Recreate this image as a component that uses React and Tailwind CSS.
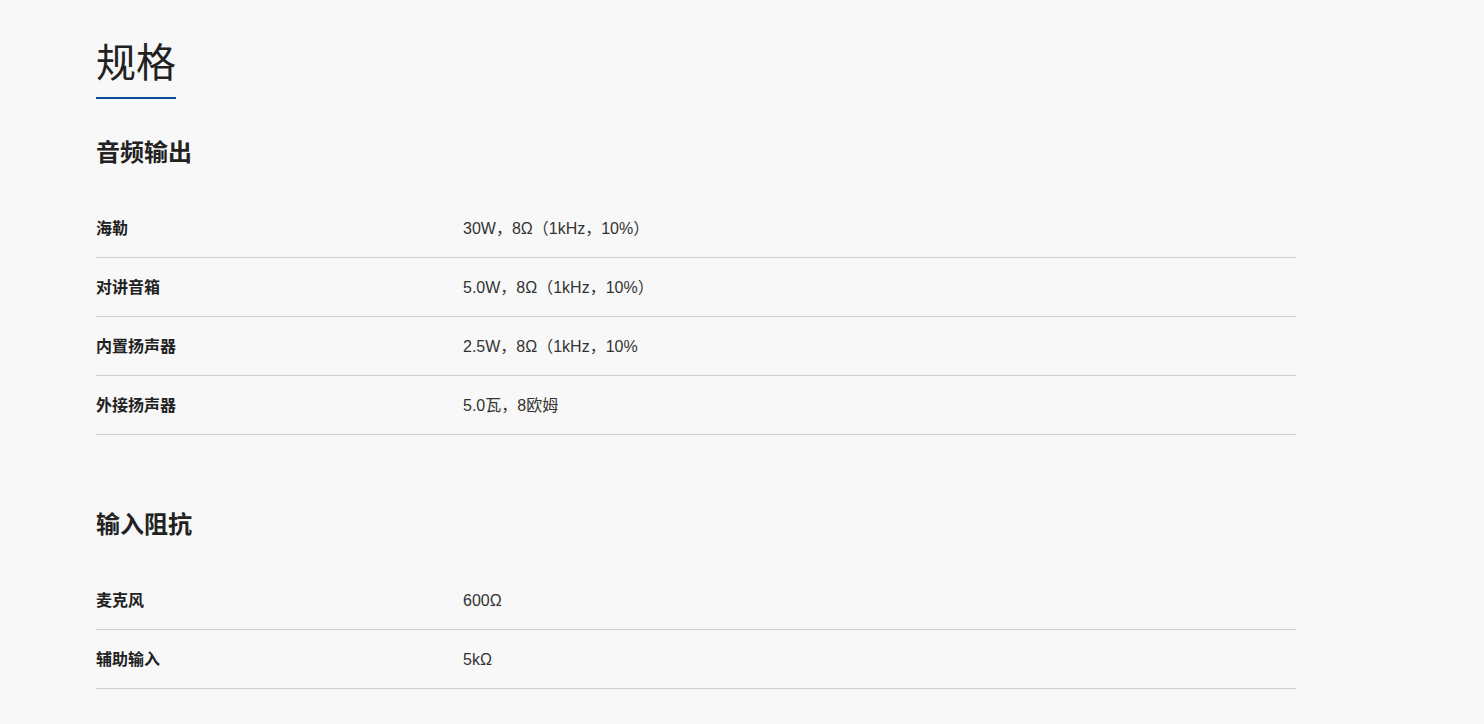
import React from "react";

const sections = [
  {
    title: "音频输出",
    rows: [
      ["海勒", "30W，8Ω（1kHz，10%）"],
      ["对讲音箱", "5.0W，8Ω（1kHz，10%）"],
      ["内置扬声器", "2.5W，8Ω（1kHz，10%"],
      ["外接扬声器", "5.0瓦，8欧姆"],
    ],
  },
  {
    title: "输入阻抗",
    rows: [
      ["麦克风", "600Ω"],
      ["辅助输入", "5kΩ"],
    ],
  },
];

const App = () => {
  return (
    <div className="min-h-screen bg-[#f8f8f8] text-[#222] font-['Liberation_Sans','Noto_Sans_CJK_SC',sans-serif]">
      <div className="w-[1200px] ml-[96px] pt-[39px] pb-10">
        {/* Page title */}
        <h1 className="inline-block text-[40px] leading-[48px] font-normal text-[#222] pb-[10px] border-b-2 border-[#0a4f9c]">
          规格
        </h1>

        {sections.map((section, i) => (
          <div key={section.title} className={i === 0 ? "mt-[38px]" : "mt-[74px]"}>
            <h2 className="text-[24px] leading-[32px] font-bold text-[#222] mb-[30px]">
              {section.title}
            </h2>
            <div>
              {section.rows.map(([label, value]) => (
                <div
                  key={label}
                  className="flex items-center h-[59px] pt-[2px] border-b border-[#cfcfcf]"
                >
                  <div className="w-[367px] text-[16px] font-bold text-[#222]">
                    {label}
                  </div>
                  <div className="text-[16px] text-[#333]">{value}</div>
                </div>
              ))}
            </div>
          </div>
        ))}
      </div>
    </div>
  );
};

export default App;
